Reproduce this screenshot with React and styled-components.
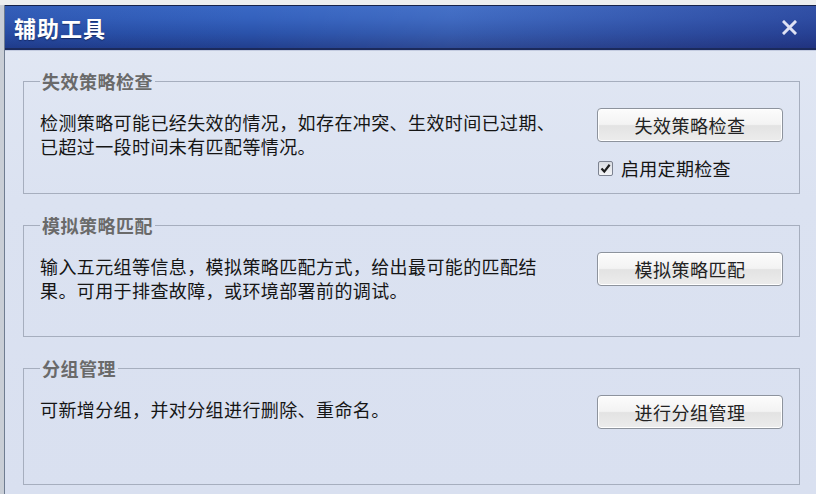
import React from 'react';
import styled, { createGlobalStyle } from 'styled-components';

const Global = createGlobalStyle`
  html, body { margin: 0; padding: 0; }
  body {
    background: #d9dde3;
    font-family: "Noto Sans CJK SC", "Noto Sans", sans-serif;
  }
`;

const Desktop = styled.div`
  width: 816px;
  height: 494px;
  overflow: hidden;
  box-sizing: border-box;
  padding: 5px 0 0 4px;
  display: flex;
  background:
    linear-gradient(180deg, #eceeef 0 5px, transparent 5px),
    linear-gradient(90deg, #c9ced6, #b8bfca);
`;

const Dialog = styled.div`
  flex: 1;
  display: flex;
  flex-direction: column;
  border-left: 1px solid #6f7c90;
  background: linear-gradient(180deg, #e2e8f4 0%, #dbe2f1 40%, #d9e0f0 100%);
`;

const TitleBar = styled.div`
  height: 45px;
  box-sizing: border-box;
  display: flex;
  align-items: center;
  justify-content: space-between;
  padding: 0 19px 0 9px;
  border-top: 1px solid #15224a;
  border-bottom: 2px solid #1b2a5c;
  box-shadow: 0 1px 0 #c3cbe0;
  background:
    linear-gradient(90deg, rgba(20, 40, 120, 0.15) 0%, rgba(255, 255, 255, 0) 30%, rgba(255, 255, 255, 0.06) 55%, rgba(30, 20, 90, 0.28) 100%),
    linear-gradient(180deg, #3a68c4 0%, #3461bd 30%, #2a52aa 65%, #223f8e 100%);
`;

const Title = styled.span`
  color: #ffffff;
  font-size: 22px;
  font-weight: bold;
  letter-spacing: 1px;
  text-shadow: 0 1px 1px rgba(10, 20, 60, 0.6);
`;

const Close = styled.svg`
  width: 15px;
  height: 15px;
  display: block;
`;

const Body = styled.div`
  flex: 1;
  display: flex;
  flex-direction: column;
  gap: 19px;
  padding: 19px 16px 0 18px;
`;

const Group = styled.fieldset`
  margin: 0;
  padding: 17px 16px 0 16px;
  min-width: 0;
  height: ${(p) => p.$height}px;
  box-sizing: border-box;
  border: 1px solid #a6aebe;
`;

const Legend = styled.legend`
  padding: 0 2px;
  margin-left: 0;
  font-size: 18px;
  line-height: 24px;
  font-weight: bold;
  color: #6a6a6a;
  letter-spacing: 0.5px;
`;

const Row = styled.div`
  display: flex;
  justify-content: space-between;
  align-items: flex-start;
`;

const Desc = styled.p`
  margin: 0;
  font-size: 18px;
  line-height: 24px;
  letter-spacing: 0.4px;
  color: #151515;
`;

const Side = styled.div`
  display: flex;
  flex-direction: column;
  align-items: flex-start;
  gap: 14px;
  margin-top: -2px;
`;

const Button = styled.button`
  width: 186px;
  height: 34px;
  box-sizing: border-box;
  border: 1px solid #8d939d;
  border-radius: 4px;
  box-shadow: inset 0 0 0 1px #ffffff;
  background: linear-gradient(180deg, #fcfcfc 0%, #f3f3f3 48%, #e3e3e3 52%, #ececec 100%);
  font-family: inherit;
  font-size: 18px;
  color: #222;
  letter-spacing: 0.5px;
  padding: 0;
  cursor: default;
`;

const CheckRow = styled.label`
  display: flex;
  align-items: center;
  gap: 8px;
  margin-left: 1px;
  font-size: 18px;
  line-height: 24px;
  color: #151515;
  letter-spacing: 0.3px;
`;

const Box = styled.span`
  width: 15px;
  height: 15px;
  box-sizing: border-box;
  border: 1px solid #7c8290;
  border-radius: 2px;
  background: linear-gradient(180deg, #d9dce2, #f4f5f7);
  display: flex;
  align-items: center;
  justify-content: center;
`;

const groups = [
  {
    title: '失效策略检查',
    height: 125,
    lines: ['检测策略可能已经失效的情况，如存在冲突、生效时间已过期、', '已超过一段时间未有匹配等情况。'],
    button: '失效策略检查',
    check: '启用定期检查',
  },
  {
    title: '模拟策略匹配',
    height: 124,
    lines: ['输入五元组等信息，模拟策略匹配方式，给出最可能的匹配结', '果。可用于排查故障，或环境部署前的调试。'],
    button: '模拟策略匹配',
  },
  {
    title: '分组管理',
    height: 129,
    lines: ['可新增分组，并对分组进行删除、重命名。'],
    button: '进行分组管理',
  },
];

export default function App() {
  return (
    <>
      <Global />
      <Desktop>
        <Dialog>
          <TitleBar>
            <Title>辅助工具</Title>
            <Close viewBox="0 0 15 15">
              <path d="M2 2 L13 13 M13 2 L2 13" stroke="#dfe2f4" strokeWidth="3" strokeLinecap="square" />
            </Close>
          </TitleBar>
          <Body>
            {groups.map((g) => (
              <Group key={g.title} $height={g.height}>
                <Legend>{g.title}</Legend>
                <Row>
                  <Desc>
                    {g.lines.map((l, i) => (
                      <React.Fragment key={i}>
                        {l}
                        {i < g.lines.length - 1 && <br />}
                      </React.Fragment>
                    ))}
                  </Desc>
                  <Side>
                    <Button>{g.button}</Button>
                    {g.check && (
                      <CheckRow>
                        <Box>
                          <svg width="11" height="11" viewBox="0 0 11 11">
                            <path d="M1.5 5.5 L4.3 8.6 L9.6 1.8" stroke="#1e1e1e" strokeWidth="2.2" fill="none" />
                          </svg>
                        </Box>
                        {g.check}
                      </CheckRow>
                    )}
                  </Side>
                </Row>
              </Group>
            ))}
          </Body>
        </Dialog>
      </Desktop>
    </>
  );
}
